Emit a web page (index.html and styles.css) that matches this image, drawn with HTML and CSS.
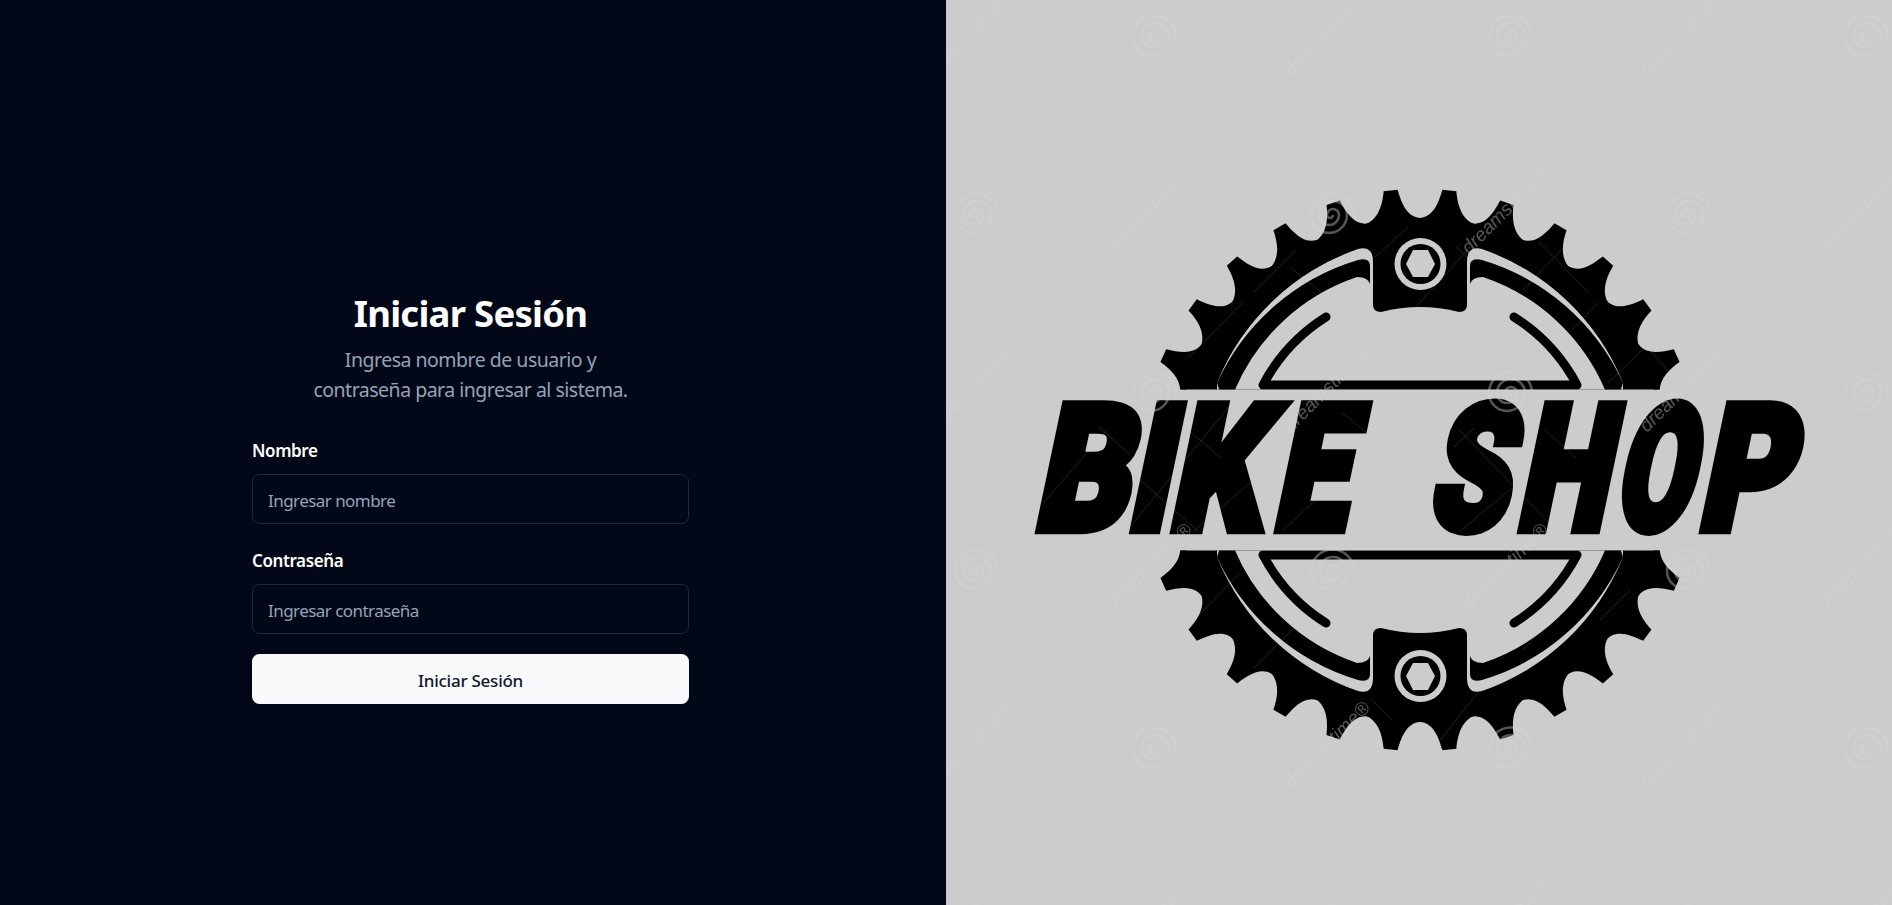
FILE: index.html
```html
<!DOCTYPE html>
<html lang="es">
<head>
<meta charset="utf-8">
<title>Iniciar Sesión</title>
<link rel="stylesheet" href="styles.css">
</head>
<body>
<main class="login">
  <section class="pane">
    <form class="card">
      <header class="card-head">
        <h1 class="title">Iniciar Sesión</h1>
        <p class="lead">Ingresa nombre de usuario y<br>contraseña para ingresar al sistema.</p>
      </header>
      <div class="field">
        <label class="label" for="nombre">Nombre</label>
        <input class="input" id="nombre" type="text" placeholder="Ingresar nombre">
      </div>
      <div class="field">
        <label class="label" for="clave">Contraseña</label>
        <input class="input" id="clave" type="password" placeholder="Ingresar contraseña">
      </div>
      <button class="submit" type="button">Iniciar Sesión</button>
    </form>
  </section>
  <aside class="art">
    <svg class="art-svg" viewBox="946 0 946 905" width="946" height="905" aria-label="Bike Shop">
      <defs>
        <clipPath id="clip-top"><rect x="946" y="0" width="946" height="389.5"/></clipPath>
        <path id="tooth" d="M-32 -250C-14 -250 -10 -265 -7 -281L7 -281C10 -266 16 -252 32 -249L0 -240Z"/>
        <g id="quarter">
          <use href="#tooth" transform="rotate(6)"/>
          <use href="#tooth" transform="rotate(18)"/>
          <use href="#tooth" transform="rotate(30)"/>
          <use href="#tooth" transform="rotate(42)"/>
          <use href="#tooth" transform="rotate(54)"/>
          <use href="#tooth" transform="rotate(66)"/>
        </g>
        <g id="half" clip-path="url(#clip-top)">
          <circle class="ink" cx="1420" cy="470" r="252"/>
          <g class="ink" transform="translate(1420 470)">
            <use href="#quarter"/>
            <use href="#quarter" transform="scale(-1 1)"/>
          </g>
          <path class="cut" d="M1217 383A235 235 0 0 1 1358 249Q1373 245 1373 262L1373 305Q1373 312 1381 312Q1420 302 1459 312Q1467 312 1467 305L1467 262Q1467 245 1482 249A235 235 0 0 1 1623 383L1623 395L1217 395Z"/>
          <path id="band" class="ink" d="M1217 383A226 226 0 0 1 1358 260Q1370 257 1370 266L1370 284Q1368 277 1357 277A203 203 0 0 0 1234 392L1220 392Z"/>
          <use class="ink" href="#band" transform="matrix(-1 0 0 1 2840 0)"/>
          <path class="slot" d="M1326 317A179 179 0 0 0 1263 385L1577 385A179 179 0 0 0 1514 317"/>
          <circle class="cut" cx="1420.5" cy="264" r="26"/>
          <circle class="ink" cx="1420.5" cy="264" r="20"/>
          <polygon class="cut" points="1406,264 1413,250 1428,250 1435,264 1428,277 1413,277"/>
        </g>
        <path id="spiral" d="M2 0A3 3 0 0 1 -4 0A6 6 0 0 1 8 0A10 10 0 0 1 -12 0A14 14 0 0 1 16 0A18 18 0 0 1 -20 0A21.500 21.500 0 0 1 23 0"/>
        <pattern id="marks" patternUnits="userSpaceOnUse" x="886" y="126" width="356" height="356">
          <use class="mark-line" href="#spiral" transform="translate(89 89)"/>
          <use class="mark-line" href="#spiral" transform="translate(267 267)"/>
          <text class="mark-text" transform="translate(89 267) rotate(-45)">dreamstime®</text>
          <text class="mark-text" transform="translate(267 89) rotate(-45)">dreamstime®</text>
        </pattern>
      </defs>

      <use href="#half"/>
      <use href="#half" transform="matrix(1 0 0 -1 0 940)"/>

      <g class="wordmark">
        <text transform="matrix(1.45 0 -0.365 1.738 1032 528.800)">B</text>
        <text transform="matrix(1.35 0 -0.365 1.738 1125 528.800)">I</text>
        <text transform="matrix(1.42 0 -0.365 1.738 1167 528.800)">K</text>
        <text transform="matrix(1.31 0 -0.365 1.738 1271 528.800)">E</text>
        <text transform="matrix(1.27 0 -0.365 1.738 1426 528.800)">S</text>
        <text transform="matrix(1.27 0 -0.365 1.738 1514.500 528.800)">H</text>
        <text transform="matrix(1.10 0 -0.365 1.738 1612 528.800)">O</text>
        <text transform="matrix(1.40 0 -0.365 1.738 1696 528.800)">P</text>
      </g>

      <path class="hair" d="M1189 357L1242 303M1254 292L1296 250M1290 267L1321 292M1375 257L1408 227M1416 307L1470 247M1456 247L1474 263M1523 290L1561 250M1539 242L1588 292M1572 330L1598 303M1608 383L1642 350M1652 352L1669 372M1043 503L1107 430M1099 427L1130 455M1130 527L1232 403M1188 430L1221 458M1140 480L1199 532M1193 532L1250 483M1283 530L1334 483M1341 412L1367 433M1454 447L1474 428M1459 430L1556 530M1459 532L1525 477M1545 430L1576 458M1197 617L1240 573M1254 668L1297 625M1372 700L1392 720M1440 740L1480 690M1523 650L1560 610M1600 620L1630 590"/>
      <rect class="mark-layer" x="946" y="0" width="946" height="905"/>
    </svg>
  </aside>
</main>
</body>
</html>
```

FILE: styles.css
```css
* { box-sizing: border-box; }

html, body {
  margin: 0;
  height: 905px;
  overflow: hidden;
}

body {
  background: #020817;
  color: #f8fafc;
  font-family: "Noto Sans", "Open Sans", sans-serif;
}

.login {
  display: grid;
  grid-template-columns: 946px 946px;
  height: 905px;
}

.pane {
  display: flex;
  justify-content: center;
  align-items: flex-start;
  padding: 291px 5px 0 0;
  background: #020817;
}

.card {
  display: flex;
  flex-direction: column;
  width: 437px;
}

.card-head {
  display: flex;
  flex-direction: column;
  gap: 9px;
  margin-bottom: 37px;
  text-align: center;
}

.title {
  margin: 0;
  font-size: 36.500px;
  line-height: 45px;
  font-weight: 700;
  letter-spacing: -0.75px;
  color: #fff;
}

.lead {
  margin: 0;
  font-size: 19.500px;
  line-height: 30px;
  letter-spacing: -0.5px;
  color: #94a3b8;
}

.field {
  display: flex;
  flex-direction: column;
  gap: 14px;
  margin-bottom: 28px;
}

.field + .field {
  margin-bottom: 20px;
}

.label {
  font-size: 17px;
  line-height: 18px;
  font-weight: 600;
  letter-spacing: -0.4px;
  color: #fff;
}

.input {
  width: 100%;
  height: 50px;
  padding: 2px 15px 0;
  background: transparent;
  border: 1px solid #1e293b;
  border-radius: 7.500px;
  color: #f8fafc;
  font: inherit;
  font-size: 17px;
  letter-spacing: -0.55px;
  outline: none;
}

.input::placeholder {
  color: #94a3b8;
  opacity: 1;
}

.submit {
  height: 50px;
  padding: 2px 0 0;
  background: #f8fafc;
  border: 0;
  border-radius: 7.500px;
  color: #0f172a;
  font: inherit;
  font-size: 17px;
  font-weight: 500;
  letter-spacing: -0.25px;
}

.art {
  background: #cccccc;
  overflow: hidden;
}

.art-svg {
  display: block;
}

.ink { fill: #000; }
.cut { fill: #ccc; }

.slot {
  fill: none;
  stroke: #000;
  stroke-width: 9;
  stroke-linecap: round;
  stroke-linejoin: round;
}

.wordmark text {
  font-family: Roboto, Inter, sans-serif;
  font-size: 100px;
  font-weight: 900;
  fill: #000;
  stroke: #000;
  stroke-width: 6px;
  stroke-linejoin: miter;
}

.hair {
  fill: none;
  stroke: rgba(212, 212, 212, 0.16);
  stroke-width: 1;
}

.mark-layer { fill: url(#marks); }

.mark-line {
  fill: none;
  stroke: rgb(212, 212, 212);
  stroke-opacity: 0.4;
  stroke-width: 2.500px;
}

.mark-text {
  font-family: "Liberation Sans", sans-serif;
  font-size: 19px;
  font-style: italic;
  text-anchor: middle;
  fill: rgb(212, 212, 212);
  fill-opacity: 0.4;
}
```
